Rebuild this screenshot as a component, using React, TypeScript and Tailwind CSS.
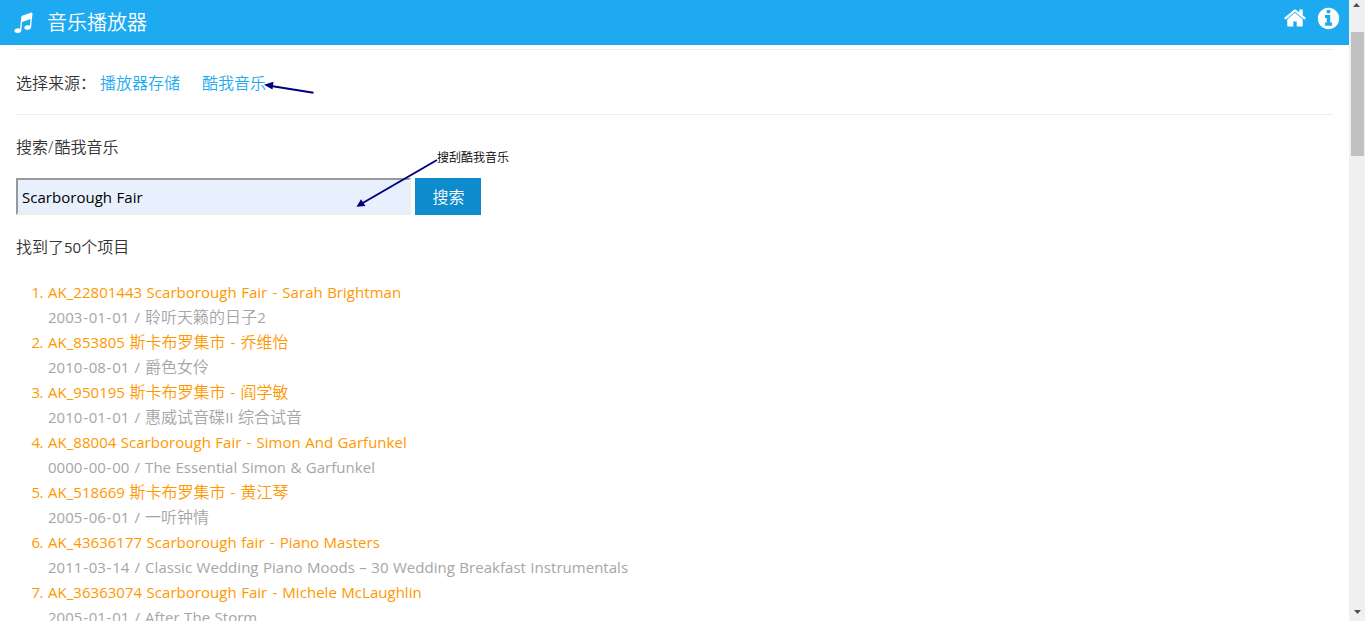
import { Fragment } from 'react';

const HOME =
  'M1472 992v480q0 26-19 45t-45 19h-384v-384h-256v384h-384q-26 0-45-19t-19-45v-480q0-1 .5-3t.5-3l575-474 575 474q1 2 1 6zm223-69l-62 74q-8 9-21 11h-3q-13 0-21-7l-692-577-692 577q-12 8-24 7-13-2-21-11l-62-74q-8-10-7-23.5t11-21.5l719-599q32-26 76-26t76 26l244 204v-195q0-14 9-23t23-9h192q14 0 23 9t9 23v408l219 182q10 8 11 21.5t-7 23.5z';
const INFO =
  'M1152 1376v-160q0-14-9-23t-23-9h-96v-512q0-14-9-23t-23-9h-320q-14 0-23 9t-9 23v160q0 14 9 23t23 9h96v320h-96q-14 0-23 9t-9 23v160q0 14 9 23t23 9h448q14 0 23-9t9-23zm-128-896v-160q0-14-9-23t-23-9h-192q-14 0-23 9t-9 23v160q0 14 9 23t23 9h192q14 0 23-9t9-23zm640 416q0 209-103 385.5t-279.5 279.5-385.5 103-385.5-103-279.5-279.5-103-385.5 103-385.5 279.5-279.5 385.5-103 385.5 103 279.5 279.5 103 385.5z';
const MUSIC =
  'M1664 224v1120q0 50-34 89t-86 60.5-103.5 32-96.5 10.5-96.5-10.5-103.5-32-86-60.5-34-89 34-89 86-60.5 103.5-32 96.5-10.5q105 0 192 39v-537l-768 237v709q0 50-34 89t-86 60.5-103.5 32-96.5 10.5-96.5-10.5-103.5-32-86-60.5-34-89 34-89 86-60.5 103.5-32 96.5-10.5q105 0 192 39v-967q0-31 19-56.5t49-35.5l832-256q12-4 28-4 40 0 68 28t28 68z';

function Icon({ d, className }: { d: string; className: string }) {
  return (
    <svg viewBox="0 0 1792 1792" preserveAspectRatio="none" fill="currentColor" className={className}>
      <path d={d} />
    </svg>
  );
}

const songs = [
  ['AK_22801443 Scarborough Fair - Sarah Brightman', '2003-01-01 / 聆听天籁的日子2'],
  ['AK_853805 斯卡布罗集市 - 乔维怡', '2010-08-01 / 爵色女伶'],
  ['AK_950195 斯卡布罗集市 - 阎学敏', '2010-01-01 / 惠威试音碟II 综合试音'],
  ['AK_88004 Scarborough Fair - Simon And Garfunkel', '0000-00-00 / The Essential Simon & Garfunkel'],
  ['AK_518669 斯卡布罗集市 - 黄江琴', '2005-06-01 / 一听钟情'],
  ['AK_43636177 Scarborough fair - Piano Masters', '2011-03-14 / Classic Wedding Piano Moods – 30 Wedding Breakfast Instrumentals'],
  ['AK_36363074 Scarborough Fair - Michele McLaughlin', '2005-01-01 / After The Storm'],
];

/* Latin runs are set slightly smaller than the Chinese ones, with wider hyphens and slashes. */
function Latin({ text }: { text: string }) {
  return (
    <span className="text-[15px] font-normal tracking-[0.03px] [word-spacing:0.5px]">
      {text.split(/([-/])/).map((part, i) =>
        i % 2 ? <span key={i} className="px-[0.7px]">{part}</span> : <Fragment key={i}>{part}</Fragment>,
      )}
    </span>
  );
}

function Mixed({ text }: { text: string }) {
  return (
    <>
      {text.split(/([\u4e00-\u9fff]+)/).map((run, i) =>
        i % 2 ? <Fragment key={i}>{run}</Fragment> : <Latin key={i} text={run} />,
      )}
    </>
  );
}

export default function App() {
  return (
    <div className="relative flex h-[621px] w-[1365px] overflow-hidden bg-white font-['Open_Sans','Noto_Sans_CJK_SC',sans-serif] text-base leading-[25px] font-[350] text-[#333]">
      <div className="flex min-w-0 flex-1 flex-col">
        <header className="flex h-[45px] shrink-0 items-center bg-[#1eaaf1] pr-2 pl-[14px] text-white">
          <Icon d={MUSIC} className="-mt-px h-[22px] w-[19px] -skew-x-6" />
          <h1 className="ml-[14px] flex-1 text-xl leading-[45px]">音乐播放器</h1>
          <Icon d={HOME} className="-mt-2.5 mr-[9px] size-6" />
          <Icon d={INFO} className="-mt-2 size-[25px]" />
        </header>
        <main className="flex min-h-0 flex-1 flex-col overflow-hidden px-4 pt-1">
          <div className="flex h-[66px] shrink-0 items-center border-y border-[#eee] pt-0.5">
            <span>选择来源：</span>
            <a className="ml-1 text-[#1eaaf1]">播放器存储</a>
            <a className="ml-[22px] text-[#1eaaf1]">酷我音乐</a>
          </div>
          <p className="mt-5 h-[25px] shrink-0">搜索<span className="pr-px">/</span>酷我音乐</p>
          <div className="mt-[18px] flex h-[37px] shrink-0 gap-1">
            <div className="w-[395px] border-2 border-t-[#999] border-r-[#eee] border-b-[#eee] border-l-[#999] bg-[#e8f0fe] pl-1 leading-[35px] text-black"><Latin text="Scarborough Fair" /></div>
            <button className="w-[66px] bg-[#0d8bcd] pt-px pl-px leading-[36px] text-white">搜索</button>
          </div>
          <p className="mt-5 h-[25px] shrink-0"><Mixed text="找到了50个项目" /></p>
          <ol className="mt-5">
            {songs.map(([title, album], i) => (
              <li key={title} className="flex">
                <span className="w-8 shrink-0 pr-[5px] text-right text-[15px] font-normal tracking-[-0.5px] text-[#ff9800]">{i + 1}.</span>
                <div className="flex flex-col whitespace-nowrap">
                  <a className="h-[25px] text-[#ff9800]"><Mixed text={title} /></a>
                  <span className="h-[25px] text-[#a6a6a6]"><Mixed text={album} /></span>
                </div>
              </li>
            ))}
          </ol>
        </main>
      </div>
      <div className="flex w-4 shrink-0 flex-col items-center justify-between bg-[#f0f0f0]">
        <svg viewBox="0 0 16 32" className="h-8 w-4 fill-[#505050]"><path d="M4 7h7L7.500 3z" /></svg>
        <div className="h-[124px] w-[13px] bg-[#c1c1c1]" />
        <div className="flex-1" />
        <svg viewBox="0 0 16 16" className="size-4 fill-[#505050]"><path d="M5 5h7L8.500 9z" /></svg>
      </div>
      <svg viewBox="0 0 1365 621" className="pointer-events-none absolute inset-0 h-full w-full fill-[#000080] stroke-[#000080]">
        <path d="M313.500 92.700L268 85.500M437 160L361 204" strokeWidth="2" />
        <path d="M264 84.800L273.500 81.700L272.500 89.500ZM356.500 206.800L361 199.200L365.500 206Z" stroke="none" />
      </svg>
      <span className="absolute top-[149px] left-[437px] text-xs leading-[18px] text-black">搜刮酷我音乐</span>
    </div>
  );
}
